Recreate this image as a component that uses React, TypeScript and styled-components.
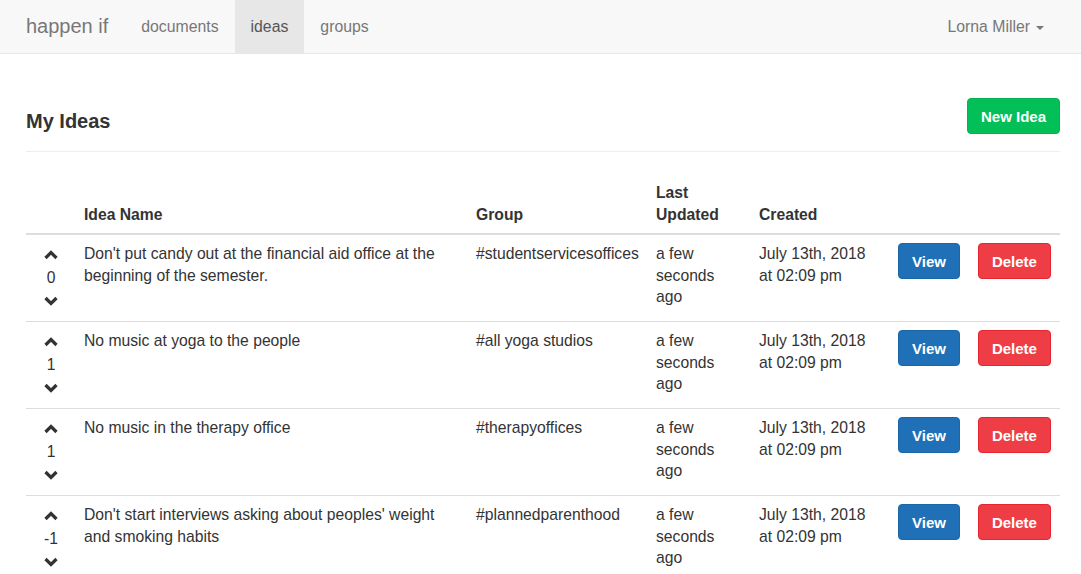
import React from "react";
import styled, { createGlobalStyle } from "styled-components";

const GlobalStyle = createGlobalStyle`
  html, body { margin: 0; padding: 0; background: #fff; }
  body {
    font-family: "Liberation Sans", Arial, sans-serif;
    font-size: 15.7px;
    line-height: 21.5px;
    color: #333;
  }
  * { box-sizing: border-box; }
`;

const Navbar = styled.nav`
  height: 54px;
  background: #f8f8f8;
  border-bottom: 1px solid #e7e7e7;
  display: flex;
  align-items: stretch;
  padding: 0 21px 0 26px;
`;

const Brand = styled.a`
  display: flex;
  align-items: center;
  font-size: 20px;
  color: #777;
  padding-right: 17px;
  text-decoration: none;
`;

const NavList = styled.div`
  display: flex;
  align-items: stretch;
`;

const NavLink = styled.a<{ $active?: boolean }>`
  display: flex;
  align-items: center;
  padding: 0 16px;
  font-size: 15.8px;
  color: ${(p) => (p.$active ? "#555" : "#777")};
  background: ${(p) => (p.$active ? "#e7e7e7" : "transparent")};
  text-decoration: none;
`;

const Spacer = styled.div`
  flex: 1;
`;

const UserMenu = styled.a`
  display: flex;
  align-items: center;
  gap: 6px;
  padding: 0 16px;
  font-size: 15.8px;
  color: #777;
`;

const Caret = styled.span`
  display: inline-block;
  width: 0;
  height: 0;
  border-left: 4px solid transparent;
  border-right: 4px solid transparent;
  border-top: 4px solid #777;
  margin-top: 2px;
`;

const Container = styled.main`
  padding: 0 21px 0 26px;
`;

const PageHeader = styled.div`
  display: flex;
  justify-content: space-between;
  align-items: flex-end;
  padding-top: 44px;
  padding-bottom: 17px;
  border-bottom: 1px solid #eee;
`;

const Title = styled.h1`
  margin: 0 0 2px 0;
  font-size: 20px;
  line-height: 22px;
  font-weight: 700;
  color: #333;
`;

const Button = styled.button<{ $variant: "success" | "primary" | "danger" }>`
  font-family: "Liberation Sans", Arial, sans-serif;
  font-size: 15px;
  font-weight: 700;
  line-height: 21px;
  height: 36px;
  padding: 0 13px;
  border-radius: 4px;
  color: #fff;
  cursor: pointer;
  background: ${(p) =>
    p.$variant === "success" ? "#02bf58" : p.$variant === "primary" ? "#1f70b6" : "#ef3d45"};
  border: 1px solid
    ${(p) =>
      p.$variant === "success" ? "#02b552" : p.$variant === "primary" ? "#1c67a8" : "#e32630"};
`;

const Table = styled.table`
  width: 100%;
  margin-top: 22px;
  border-collapse: collapse;
  table-layout: fixed;
`;

const Th = styled.th`
  text-align: left;
  vertical-align: bottom;
  font-weight: 700;
  padding: 8px;
  border-bottom: 2px solid #ddd;
`;

const Td = styled.td`
  vertical-align: top;
  padding: 8px;
  border-bottom: 1px solid #ddd;
`;

const VoteCell = styled.div`
  display: grid;
  grid-template-rows: repeat(3, 1fr);
  height: 70px;
  justify-items: center;
  align-items: center;
`;

const VoteCount = styled.span`
  font-size: 15.7px;
  line-height: 21px;
`;

const Actions = styled.div`
  display: flex;
  gap: 18px;
`;

const Chevron = ({ down }: { down?: boolean }) => (
  <svg width="14" height="10" viewBox="0 0 14 10" style={{ display: "block" }}>
    <polyline
      points={down ? "1.5,2 7,7.5 12.5,2" : "1.5,8 7,2.5 12.5,8"}
      fill="none"
      stroke="#333"
      strokeWidth="3.2"
      strokeLinejoin="miter"
    />
  </svg>
);

const ideas = [
  {
    votes: 0,
    name: "Don't put candy out at the financial aid office at the beginning of the semester.",
    group: "#studentservicesoffices",
  },
  { votes: 1, name: "No music at yoga to the people", group: "#all yoga studios" },
  { votes: 1, name: "No music in the therapy office", group: "#therapyoffices" },
  {
    votes: -1,
    name: "Don't start interviews asking about peoples' weight and smoking habits",
    group: "#plannedparenthood",
  },
];

export default function App() {
  return (
    <>
      <GlobalStyle />
      <Navbar>
        <Brand>happen if</Brand>
        <NavList>
          <NavLink>documents</NavLink>
          <NavLink $active>ideas</NavLink>
          <NavLink>groups</NavLink>
        </NavList>
        <Spacer />
        <UserMenu>
          Lorna Miller <Caret />
        </UserMenu>
      </Navbar>
      <Container>
        <PageHeader>
          <Title>My Ideas</Title>
          <Button $variant="success">New Idea</Button>
        </PageHeader>
        <Table>
          <colgroup>
            <col style={{ width: 50 }} />
            <col style={{ width: 392 }} />
            <col style={{ width: 180 }} />
            <col style={{ width: 103 }} />
            <col style={{ width: 139 }} />
            <col style={{ width: 170 }} />
          </colgroup>
          <thead>
            <tr>
              <Th></Th>
              <Th>Idea Name</Th>
              <Th>Group</Th>
              <Th>Last Updated</Th>
              <Th>Created</Th>
              <Th></Th>
            </tr>
          </thead>
          <tbody>
            {ideas.map((idea, i) => (
              <tr key={i}>
                <Td>
                  <VoteCell>
                    <Chevron />
                    <VoteCount>{idea.votes}</VoteCount>
                    <Chevron down />
                  </VoteCell>
                </Td>
                <Td>{idea.name}</Td>
                <Td>{idea.group}</Td>
                <Td>a few seconds ago</Td>
                <Td>July 13th, 2018 at 02:09 pm</Td>
                <Td>
                  <Actions>
                    <Button $variant="primary">View</Button>
                    <Button $variant="danger">Delete</Button>
                  </Actions>
                </Td>
              </tr>
            ))}
          </tbody>
        </Table>
      </Container>
    </>
  );
}
